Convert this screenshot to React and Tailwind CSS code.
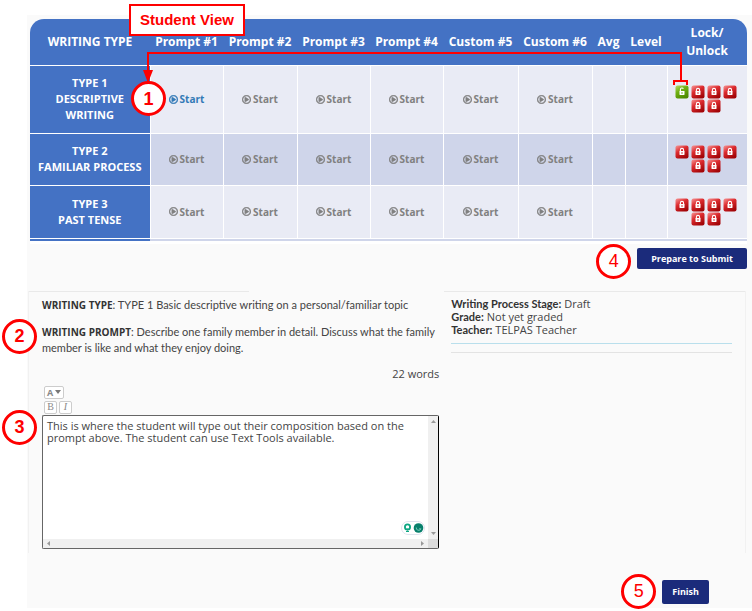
import { useState } from 'react'
import { FaRegPlayCircle } from 'react-icons/fa'

const COLUMNS = [
  { label: 'WRITING TYPE', w: 'w-[120px]' },
  { label: 'Prompt #1', w: 'w-[73px]' },
  { label: 'Prompt #2', w: 'w-[74px]' },
  { label: 'Prompt #3', w: 'w-[73px]' },
  { label: 'Prompt #4', w: 'w-[73px]' },
  { label: 'Custom #5', w: 'w-[75px]' },
  { label: 'Custom #6', w: 'w-[74px]' },
  { label: 'Avg', w: 'w-[33px]' },
  { label: 'Level', w: 'w-[42px]' },
  { label: 'Lock/ Unlock', w: 'w-[80px]' },
]

const ROWS = [
  { lines: ['TYPE 1', 'DESCRIPTIVE', 'WRITING'], h: 'h-[68px]', bg: 'bg-[#e9ebf5]', open: 0 },
  { lines: ['TYPE 2', 'FAMILIAR PROCESS'], h: 'h-[52px]', bg: 'bg-[#cfd5ea]', open: -1 },
  { lines: ['TYPE 3', 'PAST TENSE'], h: 'h-[53px]', bg: 'bg-[#e9ebf5]', open: -1 },
]

const SLOTS = [0, 1, 2, 3, 4, 5]

function LockIcon({ open }) {
  const id = open ? 'lock-green' : 'lock-red'
  return (
    <svg viewBox="0 0 14 14" className="size-[14px]" aria-hidden="true">
      <defs>
        <linearGradient id={id} x1="0" y1="0" x2="0.6" y2="1">
          <stop offset="0" stopColor={open ? '#b5dc6a' : '#f79a9a'} />
          <stop offset="0.45" stopColor={open ? '#6fb012' : '#dd2c30'} />
          <stop offset="1" stopColor={open ? '#4d8a00' : '#a30508'} />
        </linearGradient>
      </defs>
      <rect x="0.5" y="0.5" width="13" height="13" rx="2" fill={`url(#${id})`} />
      <path d={open ? 'M5.4 6.5V4.6a1.6 1.6 0 0 1 3-.8' : 'M5.4 6.5V5a1.6 1.6 0 0 1 3.2 0v1.5'} fill="none" stroke="#fff" strokeWidth="1.1" />
      <rect x="4.5" y="6" width="5" height="4" rx="0.4" fill="#fff" />
      <rect x="6.5" y="7.2" width="1" height="1.6" fill={open ? '#5c9c08' : '#c01518'} />
    </svg>
  )
}

// Numbered callout; the caller places it over the content
function Callout({ n, className }) {
  return (
    <span className={`absolute z-10 flex size-[35px] items-center justify-center rounded-full border-3 border-[#fe0000] bg-white font-['Liberation_Sans',sans-serif] text-[18px] leading-none text-[#fe0000] ${className}`}>
      {n}
    </span>
  )
}

function LockCell({ open, row }) {
  return (
    <div className="flex flex-wrap justify-center gap-x-[2px] pr-2 pl-[6px]">
      {SLOTS.map((i) => (
        <button key={i} type="button" aria-label={`${open === i ? 'Lock' : 'Unlock'} ${row} ${i + 1}`} className="block size-[14px]">
          <LockIcon open={open === i} />
        </button>
      ))}
    </div>
  )
}

function ProgressTable() {
  return (
    <div className="overflow-hidden rounded-t-[14px] bg-white pb-[3px]">
      <table className="w-full table-fixed border-collapse font-bold">
        <thead>
          <tr className="h-[46px] border-b border-white bg-[#4472c4] text-[12px] leading-[18px] text-white">
            {COLUMNS.map((c) => (
              <th key={c.label} scope="col" className={`p-0 ${c.w}`}>
                {c.label === 'Lock/ Unlock' ? <>Lock/<br />Unlock</> : <span className="whitespace-nowrap">{c.label}</span>}
              </th>
            ))}
          </tr>
        </thead>
        <tbody>
          {ROWS.map((r) => (
            <tr key={r.lines[0]} className={`border-b border-white ${r.h} ${r.bg}`}>
              <th scope="row" className="bg-[#4472c4] p-0 text-[11px] leading-[16px] text-white">
                {r.lines.map((l) => <span key={l} className="block whitespace-nowrap">{l}</span>)}
              </th>
              {SLOTS.map((i) => (
                <td key={i} className="border-l border-white p-0">
                  <button type="button" className={`mx-auto flex items-center gap-[2px] text-[10px] leading-[14px] ${r.open === i ? 'text-[#337ab7]' : 'text-[#808080]'}`}>
                    <FaRegPlayCircle className="size-[9px]" strokeWidth="30" />
                    Start
                  </button>
                </td>
              ))}
              <td className="border-l border-white" />
              <td className="border-l border-white" />
              <td className="border-l border-white p-0">
                <LockCell open={r.open} row={r.lines[0]} />
              </td>
            </tr>
          ))}
        </tbody>
      </table>
      {/* top edge of the next row */}
      <div className="flex h-[2px] bg-[#cfd5ea]">
        <div className="w-1/6 bg-[#4472c4]" />
      </div>
    </div>
  )
}

function Editor() {
  const [text, setText] = useState('This is where the student will type out their composition based on the prompt above. The student can use Text Tools available.')
  const tool = 'flex h-[13px] items-center justify-center rounded-[2px] border border-[#ccc] bg-white text-[#888]'
  return (
    <div>
      <div className="flex flex-col gap-[2px] pl-[2px]">
        <button type="button" aria-label="Text colour" className={`w-[20px] gap-[2px] text-[9px] leading-none font-bold ${tool}`}>
          A
          <svg viewBox="0 0 6 4" className="h-[4px] w-[6px]" aria-hidden="true"><path d="M0 0h6L3 4z" fill="#777" /></svg>
        </button>
        <div className="flex gap-[2px] font-['Liberation_Serif',serif] text-[10px] leading-none">
          <button type="button" aria-label="Bold" className={`w-[13px] ${tool}`}>B</button>
          <button type="button" aria-label="Italic" className={`w-[13px] italic ${tool}`}>I</button>
        </div>
      </div>
      <div className="relative mt-px">
        <Callout n="3" className="top-[-5px] left-[-40px] font-bold" />
        <div className="grid grid-cols-[1fr_10px] grid-rows-[123px_9px] rounded-[2px] border border-[#666] border-r-black bg-white">
          <textarea
            aria-label="Composition"
            value={text}
            onChange={(e) => setText(e.target.value)}
            className="h-full w-full resize-none overflow-hidden py-[4px] pr-2 pl-1 text-[11px] leading-[12px] text-[#444] outline-none"
          />
          <div className="flex flex-col items-center justify-between bg-[#f0f0f0] py-[4px]">
            <svg viewBox="0 0 5 3" className="h-[3px] w-[5px]" aria-hidden="true"><path d="M0 3h5L2.5 0z" fill="#999" /></svg>
            <svg viewBox="0 0 5 3" className="h-[3px] w-[5px]" aria-hidden="true"><path d="M0 0h5L2.5 3z" fill="#999" /></svg>
          </div>
          <div className="flex items-center justify-between bg-[#f0f0f0] px-[4px]">
            <svg viewBox="0 0 3 5" className="h-[5px] w-[3px]" aria-hidden="true"><path d="M3 0v5L0 2.5z" fill="#999" /></svg>
            <svg viewBox="0 0 3 5" className="h-[5px] w-[3px]" aria-hidden="true"><path d="M0 0v5L3 2.5z" fill="#999" /></svg>
          </div>
          <div className="bg-[#dcdcdc]" />
        </div>
        {/* grammar helper floating over the text area */}
        <svg viewBox="0 0 24 14" className="absolute right-[14px] bottom-[14px] h-[14px] w-[24px]" aria-hidden="true">
          <rect x="0.5" y="0.5" width="23" height="13" rx="6.5" fill="#fff" stroke="#dfe3ee" />
          <circle cx="6.5" cy="6" r="2.6" fill="none" stroke="#0da683" strokeWidth="1.8" />
          <path d="M5 10.5h3M6.5 7.5v2" stroke="#0da683" strokeWidth="1.2" />
          <circle cx="17.5" cy="7" r="4.8" fill="#08806c" />
          <path d="M15.3 6.5a2.4 2.4 0 0 0 4.6 1.3h-1.8" fill="none" stroke="#7fd0c0" strokeWidth="0.9" />
        </svg>
      </div>
    </div>
  )
}

export default function App() {
  return (
    <div className="bg-white pt-[15px] pb-[3px] pl-[27px] font-['Open_Sans','Noto_Sans',sans-serif] text-[#444]">
      <main className="bg-[#fafafa] pb-1">
        <div className="relative pt-1 pr-[5px] pl-[3px]">
          <ProgressTable />

          {/* connector from the open lock to the first prompt */}
          <div className="absolute top-[37px] right-[70px] left-[120px] h-[29px] border-t-2 border-r-2 border-[#fe0000]">
            <div className="h-[20px] w-[2px] bg-[#fe0000]" />
            <svg viewBox="0 0 10 13" className="absolute top-[16px] left-[-4px] h-[13px] w-[10px]" aria-hidden="true">
              <path d="M0 0h10L5 13z" fill="#fe0000" />
            </svg>
            <div className="absolute right-[-8px] bottom-[-4px] h-[5px] w-[15px] border-2 border-b-0 border-[#fe0000]" />
          </div>
          <div className="absolute top-[-11px] left-[102px] border-2 border-[#fe0000] bg-white px-[9px] py-[4px] font-['Liberation_Sans',sans-serif] text-[15px] leading-[20px] font-bold text-[#fe0000]">
            Student View
          </div>
          <Callout n="1" className="top-[66px] left-[104px] font-bold" />
        </div>

        <div className="flex justify-end pt-1 pr-[5px]">
          <div className="relative">
            <Callout n="4" className="top-[-4px] left-[-41px]" />
            <button type="button" className="block h-[21px] rounded-[2px] bg-[#1b2b7b] px-[14px] text-[9px] leading-none font-bold text-white">Prepare to Submit</button>
          </div>
        </div>

        <div className="mt-[22px] mr-[6px] ml-px flex border-x border-[#f1f1f1] pb-1">
          <section className="w-[58%]">
            <div className="h-px w-[220px] bg-[#e9e9e9]" />
            <div className="pt-[5px] pr-[5px] pl-[13px]">
              <p className="font-['Lato',sans-serif] text-[11px] leading-[15px]"><b className="font-['Open_Sans',sans-serif] text-[10px] text-[#333]">WRITING TYPE</b>: TYPE 1 Basic descriptive writing on a personal/familiar topic</p>
              <div className="relative mt-[11px]">
                <Callout n="2" className="top-[-5px] left-[-40px] font-bold" />
                <p className="font-['Lato',sans-serif] text-[11px] leading-[15px]"><b className="font-['Open_Sans',sans-serif] text-[10px] text-[#333]">WRITING PROMPT</b>: Describe one family member in detail. Discuss what the family member is like and what they enjoy doing.</p>
              </div>
              <p className="mt-[11px] mb-[5px] text-right text-[11px] leading-[15px]">22 words</p>
              <Editor />
            </div>
          </section>

          <section className="flex-1">
            <div className="h-px bg-[#e9e9e9]" />
            <div className="pt-[5px] pr-[13px] pl-[7px]">
              <dl className="text-[11px] leading-[13px] [&_dt]:font-['Lato',sans-serif] [&_dt]:font-bold [&_dt]:text-[#333]">
                <div className="flex gap-[3px]"><dt>Writing Process Stage:</dt><dd>Draft</dd></div>
                <div className="flex gap-[3px]"><dt>Grade:</dt><dd>Not yet graded</dd></div>
                <div className="flex gap-[3px]"><dt>Teacher:</dt><dd>TELPAS Teacher</dd></div>
              </dl>
              <hr className="mt-[7px] border-[#b9dfec]" />
              <hr className="mt-[8px] border-[#e3e3e3]" />
            </div>
          </section>
        </div>

        <div className="flex justify-end pt-[27px] pr-[43px]">
          <div className="relative">
            <Callout n="5" className="top-[-6px] left-[-41px]" />
            <button type="button" className="block h-[24px] rounded-[2px] bg-[#1b2b7b] px-[10px] text-[9px] leading-none font-bold text-white">Finish</button>
          </div>
        </div>
      </main>
    </div>
  )
}
